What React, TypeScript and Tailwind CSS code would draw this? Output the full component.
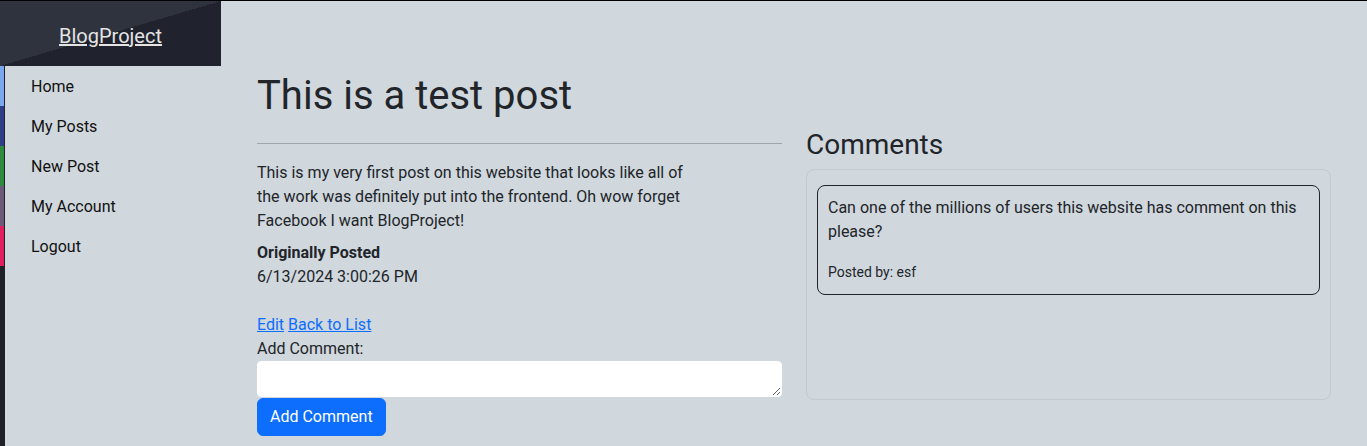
const navItems = ["Home", "My Posts", "New Post", "My Account", "Logout"];

const stripColors = ["bg-[#7aa7f0]", "bg-[#2f3f86]", "bg-[#2e8a3c]", "bg-[#6c5a78]", "bg-[#e0205e]"];

const Sidebar = () => {
  return (
    <div className="flex w-[221px] shrink-0 flex-col">
      <div className="flex h-[65px] items-center justify-center bg-[linear-gradient(to_top_left,#20232d_50%,#2e333e_50%)] pt-[5px]">
        <a href="#" className="text-[20px] text-[#e4e4e4] underline">
          BlogProject
        </a>
      </div>
      <div className="flex flex-1">
        <div className="flex w-[5px] flex-col bg-[#1f2129]">
          {stripColors.map((c, i) => (
            <div key={i} className={`h-10 w-[4px] ${c}`} />
          ))}
        </div>
        <nav className="flex flex-1 flex-col pt-px pl-[26px]">
          {navItems.map((item) => (
            <a key={item} href="#" className="flex h-10 items-center text-[16px] text-[#111]">
              {item}
            </a>
          ))}
        </nav>
      </div>
    </div>
  );
};

const App = () => {
  return (
    <div className="flex min-h-screen flex-col bg-[#d0d7dd] font-['Roboto',sans-serif] text-[#212529]">
      <div className="h-px bg-black" />
      <div className="flex flex-1">
        <Sidebar />
        <main className="flex-1 px-9 pt-[71px]">
          <h1 className="mb-2 text-[40px] leading-[1.2]">This is a test post</h1>
          <div className="grid grid-cols-2 gap-6">
            <div>
              <hr className="mt-[15px] mb-[17px] border-0 border-t border-[#a0a5a9]" />
              <p className="mb-2 w-[440px] text-[16px] leading-6">
                This is my very first post on this website that looks like all of the work was
                definitely put into the frontend. Oh wow forget Facebook I want BlogProject!
              </p>
              <div className="text-[16px] leading-6 font-bold">Originally Posted</div>
              <div className="text-[16px] leading-6">6/13/2024 3:00:26 PM</div>
              <div className="h-6" />
              <div className="text-[16px] leading-6">
                <a href="#" className="text-[#0d6efd] underline">Edit</a>{" "}
                <a href="#" className="text-[#0d6efd] underline">Back to List</a>
              </div>
              <label className="block text-[16px] leading-6">Add Comment:</label>
              <textarea className="block h-[36px] w-full rounded border border-white bg-white" />
              <button className="mt-px rounded-md border border-[#0d6efd] bg-[#0d6efd] px-3 py-1.5 text-[16px] leading-6 text-white">
                Add Comment
              </button>
            </div>
            <div>
              <h3 className="mb-[7px] text-[28px] leading-[1.2]">Comments</h3>
              <div className="h-[231px] rounded-lg border border-[#c3c9ce] px-[10px] pt-[15px]">
                <div className="rounded-lg border border-[#212529] px-[10px] pt-[10px] pb-[11px]">
                  <p className="mb-[18px] text-[16px] leading-6">
                    Can one of the millions of users this website has comment on this please?
                  </p>
                  <div className="text-[14px] leading-[21px]">Posted by: esf</div>
                </div>
              </div>
            </div>
          </div>
        </main>
      </div>
    </div>
  );
};

export default App;
